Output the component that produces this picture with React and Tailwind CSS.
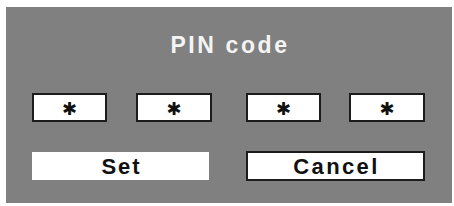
export default function App() {
  const font = { fontFamily: '"Liberation Sans", Arial, sans-serif' };
  return (
    <div className="w-[454px] h-[206px] bg-white pt-[7px] pl-[6px]" style={font}>
      <div className="w-[446px] h-[196px] bg-[#808080] flex flex-col">
        <div className="mt-[25px] h-[26px] leading-[26px] text-[23px] font-bold text-[#f4f4f4] text-center tracking-[2.6px] pl-[2px]">
          PIN code
        </div>
        <div className="mt-[35px] flex pl-[26px]">
          <PinBox w="w-[75px]" />
          <div className="ml-[29px]"><PinBox w="w-[76px]" /></div>
          <div className="ml-[34px]"><PinBox w="w-[75px]" /></div>
          <div className="ml-[28px]"><PinBox w="w-[76px]" /></div>
        </div>
        <div className="mt-[29px] flex items-center h-[30px] pl-[26px]">
          <div className="w-[177px] h-[28px] bg-white flex items-center justify-center text-[22px] font-bold text-[#111] tracking-[2px] pl-[2px]">
            Set
          </div>
          <div className="ml-[37px] w-[179px] h-[30px] bg-white border-2 border-[#1c1c1c] flex items-center justify-center text-[22px] font-bold text-[#111] tracking-[2.4px] pl-[2px]">
            Cancel
          </div>
        </div>
      </div>
    </div>
  );
}

function PinBox({ w }) {
  return (
    <div className={`${w} h-[29px] bg-white border-2 border-[#1c1c1c] flex items-center justify-center`}>
      <span
        className="text-[18px] leading-none text-[#111] translate-y-[1px]"
        style={{ fontFamily: '"DejaVu Sans", sans-serif' }}
      >
        ✱
      </span>
    </div>
  );
}
